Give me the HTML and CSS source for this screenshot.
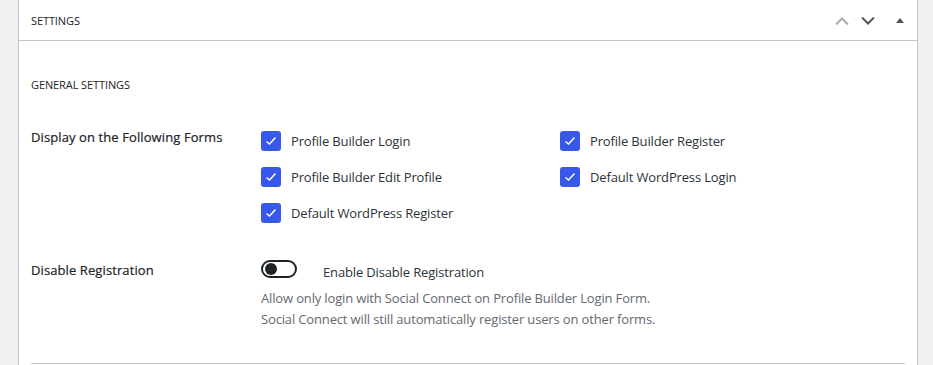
FILE: index.html
```html
<!DOCTYPE html>
<html>
<head>
<meta charset="utf-8">
<link rel="stylesheet" href="styles.css">
</head>
<body>
<div class="panel">
  <div class="panel-head">
    <h2 class="panel-title">Settings</h2>
    <div class="panel-actions">
      <svg class="ico ico-up" width="14" height="8" viewBox="0 0 14 8"><path d="M1 7.5 L7 1.5 L13 7.5" fill="none" stroke="#a7aaad" stroke-width="2"/></svg>
      <svg class="ico ico-down" width="14" height="8" viewBox="0 0 14 8"><path d="M1 0.5 L7 6.5 L13 0.5" fill="none" stroke="#50575e" stroke-width="2"/></svg>
      <svg class="ico ico-tri" width="8" height="5" viewBox="0 0 8 5"><path d="M0 5 L4 0 L8 5 Z" fill="#50575e"/></svg>
    </div>
  </div>
  <div class="panel-body">
    <h4 class="section-title">General Settings</h4>
    <div class="row row-forms">
      <div class="row-label">Display on the Following Forms</div>
      <div class="options">
        <label class="opt"><span class="cb"><svg width="12" height="10" viewBox="0 0 12 10"><path d="M1.5 5.5 L4.5 8 L10.5 1.5" fill="none" stroke="#fff" stroke-width="1.5"/></svg></span>Profile Builder Login</label>
        <label class="opt"><span class="cb"><svg width="12" height="10" viewBox="0 0 12 10"><path d="M1.5 5.5 L4.5 8 L10.5 1.5" fill="none" stroke="#fff" stroke-width="1.5"/></svg></span>Profile Builder Register</label>
        <label class="opt"><span class="cb"><svg width="12" height="10" viewBox="0 0 12 10"><path d="M1.5 5.5 L4.5 8 L10.5 1.5" fill="none" stroke="#fff" stroke-width="1.5"/></svg></span>Profile Builder Edit Profile</label>
        <label class="opt"><span class="cb"><svg width="12" height="10" viewBox="0 0 12 10"><path d="M1.5 5.5 L4.5 8 L10.5 1.5" fill="none" stroke="#fff" stroke-width="1.5"/></svg></span>Default WordPress Login</label>
        <label class="opt"><span class="cb"><svg width="12" height="10" viewBox="0 0 12 10"><path d="M1.5 5.5 L4.5 8 L10.5 1.5" fill="none" stroke="#fff" stroke-width="1.5"/></svg></span>Default WordPress Register</label>
      </div>
    </div>
    <div class="row row-disable">
      <div class="row-label label-disable">Disable Registration</div>
      <div class="field">
        <label class="toggle-line"><span class="toggle"><span class="knob"></span></span><span class="toggle-text">Enable Disable Registration</span></label>
        <p class="desc">Allow only login with Social Connect on Profile Builder Login Form.<br>Social Connect will still automatically register users on other forms.</p>
      </div>
    </div>
    <div class="sep"></div>
  </div>
</div>
</body>
</html>
```

FILE: styles.css
```css
html, body {
  margin: 0;
  padding: 0;
  background: #f0f0f1;
  font-family: "Open Sans", "Noto Sans", sans-serif;
  color: #1d2327;
  font-size: 13px;
}
.panel {
  margin: -1px 0 0 18px;
  width: 898px;
  height: 400px;
  background: #fff;
  border: 1px solid #c3c4c7;
}
.panel-head {
  height: 40px;
  border-bottom: 1px solid #c3c4c7;
  display: flex;
  align-items: center;
  justify-content: space-between;
  padding: 0 13px 0 12px;
}
.panel-title {
  margin: 0;
  font-size: 11px;
  font-weight: 400;
  text-transform: uppercase;
  letter-spacing: -0.1px;
}
.panel-actions {
  display: flex;
  align-items: center;
  gap: 12px;
  padding-top: 1px;
}
.ico { display: block; }
.ico-tri { margin-left: 9px; }
.panel-body {
  padding: 0 12px;
}
.section-title {
  margin: 0;
  padding-top: 37px;
  font-size: 11px;
  font-weight: 400;
  text-transform: uppercase;
  line-height: 14px;
  letter-spacing: -0.1px;
}
.row {
  display: grid;
  grid-template-columns: 230px 1fr;
}
.row-forms { margin-top: 35px; }
.row-label {
  font-weight: 400;
  line-height: 20px;
  letter-spacing: 0.1px;
  -webkit-text-stroke: 0.2px #1d2327;
}
.options {
  display: grid;
  grid-template-columns: 299px 299px;
  row-gap: 16px;
  padding-top: 4px;
}
.opt {
  display: flex;
  align-items: center;
  gap: 10px;
  height: 20px;
  letter-spacing: -0.15px;
  color: #2c3338;
}
.cb {
  width: 20px;
  height: 20px;
  border-radius: 3px;
  background: #3858e9;
  display: flex;
  align-items: center;
  justify-content: center;
  flex: none;
}
.row-disable { margin-top: 36px; }
.label-disable { padding-top: 1px; }
.toggle-line {
  display: flex;
  align-items: center;
  height: 20px;
}
.toggle {
  box-sizing: border-box;
  width: 36px;
  height: 18px;
  border: 2px solid #1d2327;
  border-radius: 10px;
  display: flex;
  align-items: center;
  padding: 0 2px;
  flex: none;
}
.knob {
  width: 12px;
  height: 12px;
  border-radius: 50%;
  background: #1d2327;
}
.toggle-text {
  margin-left: 26px;
  padding-top: 5px;
  letter-spacing: -0.15px;
  color: #2c3338;
}
.desc {
  margin: 9px 0 0;
  line-height: 21px;
  color: #646970;
  letter-spacing: -0.15px;
}
.sep {
  margin-top: 33px;
  border-top: 1px solid #c3c4c7;
}
```
